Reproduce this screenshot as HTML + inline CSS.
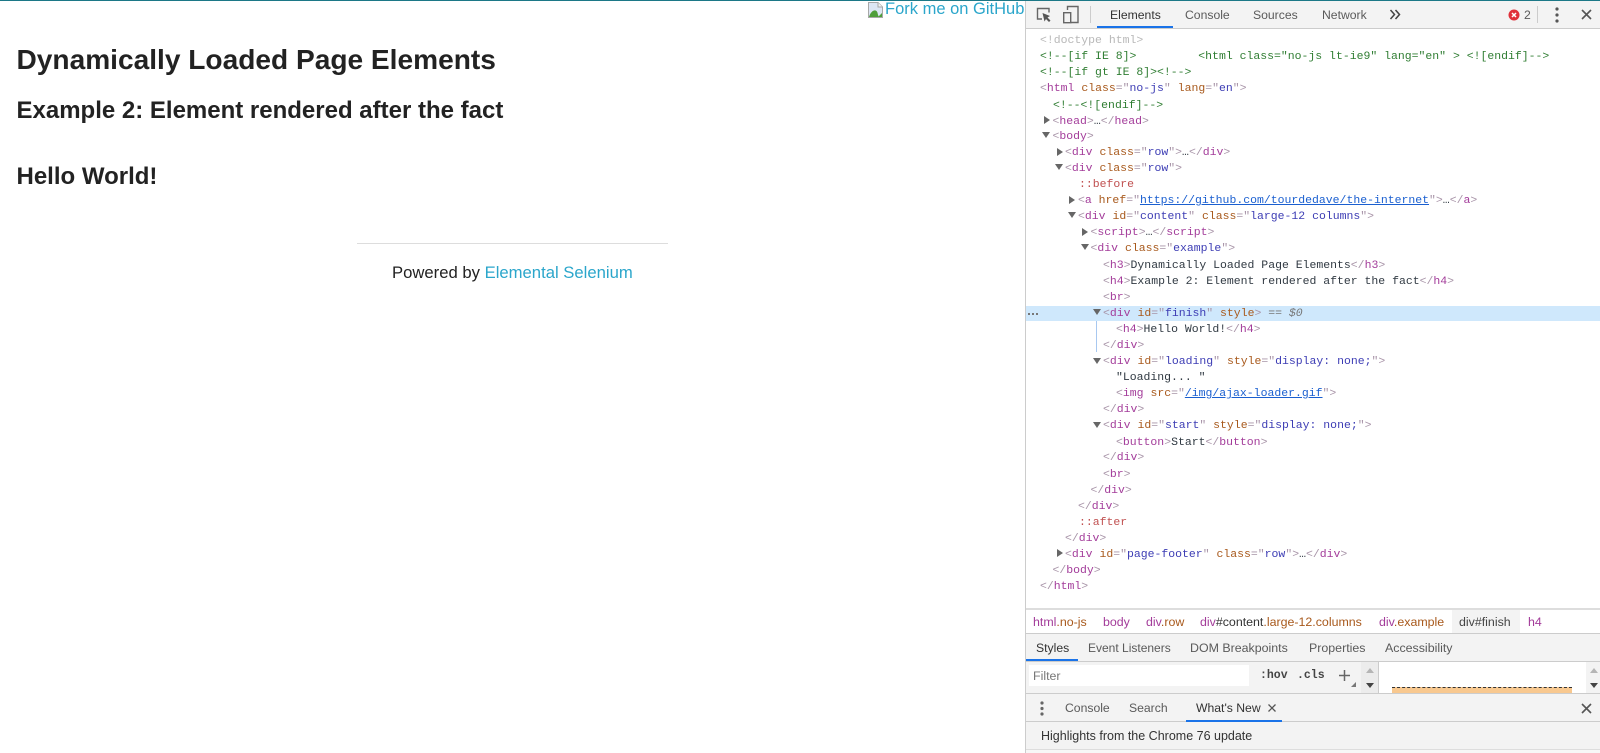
<!DOCTYPE html>
<html lang="en"><head><meta charset="utf-8"><title>Dynamically Loaded Page Elements</title>
<style>
html,body{margin:0;padding:0;background:#fff;width:1600px;height:753px;overflow:hidden}
body{position:relative;font-family:"Liberation Sans",sans-serif;color:#222}
.abs,.l,.u{position:absolute;white-space:pre}
#top{position:absolute;left:0;top:0;width:1600px;height:1px;background:#1c7887;z-index:5}
h3,h4{position:absolute;margin:0;left:16.5px;font-weight:bold;color:#222;white-space:pre;line-height:32px}
h3{font-size:28.1px;top:44px}
h4{font-size:24px}
#dt{position:absolute;left:1025px;top:0;width:575px;height:753px;background:#fff;border-left:1px solid #ccc;box-sizing:border-box}
.bar{position:absolute;left:1026px;width:574px;background:#f3f3f3}
.line{position:absolute;background:#ccc}
.u{font-size:12.2px;line-height:16px;color:#5a5a5a}
.l{font-family:"Liberation Mono",monospace;font-size:11.47px;line-height:16px;color:#303942;height:16px}
.t{color:#a33c9a}.a{color:#a8591c}.v{color:#3c3cb4}.c{color:#2f7d32}.g{color:#b8b8b8}.p{color:#c05050}.b{color:#a894a8}
.h{color:#1a5fd0;text-decoration:underline}
.arr{position:absolute;width:0;height:0}
.ad{border-left:4px solid transparent;border-right:4px solid transparent;border-top:6px solid #666}
.ar{border-top:4px solid transparent;border-bottom:4px solid transparent;border-left:6px solid #666}
.crumb{font-size:12.4px}
</style></head>
<body>
<div id="top"></div>

<h3>Dynamically Loaded Page Elements</h3>
<h4 style="top:95px">Example 2: Element rendered after the fact</h4>
<h4 style="top:161px">Hello World!</h4>
<div class="abs" style="left:357px;top:243px;width:311px;height:1px;background:#ddd"></div>
<div class="abs" style="left:392px;top:262px;font-size:16.67px;line-height:22px;color:#222">Powered by <span style="color:#2ba6cb">Elemental Selenium</span></div>

<svg class="abs" style="left:867px;top:1px" width="18" height="18" viewBox="0 0 18 18"><path d="M1.5 1.5H11L15.5 6V16.5H1.5Z" fill="#dde6f4" stroke="#a8a8a8"/><path d="M11 1.5V6H15.5" fill="#f2f2f2" stroke="#a8a8a8"/><path d="M2 16C3.5 11 7 8 9.5 10C11 11.5 10.5 14 12 16Z" fill="#4f9e3a"/><path d="M11 16L15 12V16Z" fill="#4f9e3a"/></svg>
<div class="abs" style="left:885px;top:-1px;font-size:16.5px;line-height:20px;color:#2ba6cb;width:140px;overflow:hidden">Fork me on GitHub</div>

<div id="dt"></div>

<!-- top toolbar -->
<div class="bar" style="top:1px;height:27px"></div>
<div class="line" style="left:1026px;top:28px;width:574px;height:1px"></div>
<svg class="abs" style="left:1035px;top:6px" width="18" height="18" viewBox="0 0 18 18"><path d="M7 13H2.5V2.5H14V6.5" fill="none" stroke="#666" stroke-width="1.4"/><path d="M7.5 7L15 10L12.5 11.5L15.5 14.5L14 16L11 13L9.5 15.5Z" fill="#555"/></svg>
<svg class="abs" style="left:1062px;top:5px" width="18" height="20" viewBox="0 0 18 20"><path d="M5.5 5V1.5H16V17.5H9" fill="none" stroke="#666" stroke-width="1.4"/><rect x="1.7" y="7.7" width="7" height="10" fill="none" stroke="#666" stroke-width="1.4"/></svg>
<div class="abs" style="left:1090px;top:6px;width:1px;height:17px;background:#ccc"></div>
<div class="u" style="left:1110px;top:7px;color:#333">Elements</div>
<div class="abs" style="left:1097px;top:26px;width:76px;height:2px;background:#1a73e8"></div>
<div class="u" style="left:1185px;top:7px">Console</div>
<div class="u" style="left:1253px;top:7px">Sources</div>
<div class="u" style="left:1322px;top:7px">Network</div>
<svg class="abs" style="left:1389px;top:9px" width="12" height="11" viewBox="0 0 12 11"><path d="M1.5 1L5.5 5.5L1.5 10M6.5 1L10.5 5.5L6.5 10" fill="none" stroke="#444" stroke-width="1.5"/></svg>
<svg class="abs" style="left:1508px;top:9px" width="12" height="12" viewBox="0 0 12 12"><circle cx="6" cy="6" r="5.5" fill="#e0303a"/><path d="M4 4L8 8M8 4L4 8" stroke="#fff" stroke-width="1.5"/></svg>
<div class="u" style="left:1524px;top:7px">2</div>
<div class="abs" style="left:1537px;top:6px;width:1px;height:17px;background:#ccc"></div>
<svg class="abs" style="left:1555px;top:7px" width="4" height="16" viewBox="0 0 4 16"><circle cx="2" cy="2" r="1.6" fill="#555"/><circle cx="2" cy="8" r="1.6" fill="#555"/><circle cx="2" cy="14" r="1.6" fill="#555"/></svg>
<svg class="abs" style="left:1581px;top:9px" width="11" height="11" viewBox="0 0 11 11"><path d="M1 1L10 10M10 1L1 10" stroke="#555" stroke-width="1.6"/></svg>

<!-- highlight -->
<div class="abs" style="left:1026px;top:306px;width:574px;height:15px;background:#cfe8fc"></div>
<div class="abs" style="left:1096px;top:321px;width:1px;height:31px;background:#a8c8f0"></div>
<div class="abs" style="left:1028px;top:313px;width:10px;height:2px;background:repeating-linear-gradient(90deg,#777 0 2px,transparent 2px 4px)"></div>

<!-- DOM -->
<div class="l" style="left:1040px;top:33px"><span class="g">&lt;!doctype html&gt;</span></div>
<div class="l" style="left:1040px;top:49px"><span class="c">&lt;!--[if IE 8]&gt;         &lt;html class="no-js lt-ie9" lang="en" &gt; &lt;![endif]--&gt;</span></div>
<div class="l" style="left:1040px;top:65px"><span class="c">&lt;!--[if gt IE 8]&gt;&lt;!--&gt;</span></div>
<div class="l" style="left:1040px;top:81px"><span class="b">&lt;</span><span class="t">html</span> <span class="a">class</span><span class="b">="</span><span class="v">no-js</span><span class="b">"</span> <span class="a">lang</span><span class="b">="</span><span class="v">en</span><span class="b">"&gt;</span></div>
<div class="l" style="left:1053px;top:98px"><span class="c">&lt;!--&lt;![endif]--&gt;</span></div>
<div class="l" style="left:1052.5px;top:114px"><span class="b">&lt;</span><span class="t">head</span><span class="b">&gt;</span>…<span class="b">&lt;/</span><span class="t">head</span><span class="b">&gt;</span></div>
<div class="l" style="left:1052.5px;top:129px"><span class="b">&lt;</span><span class="t">body</span><span class="b">&gt;</span></div>
<div class="l" style="left:1065px;top:145px"><span class="b">&lt;</span><span class="t">div</span> <span class="a">class</span><span class="b">="</span><span class="v">row</span><span class="b">"&gt;</span>…<span class="b">&lt;/</span><span class="t">div</span><span class="b">&gt;</span></div>
<div class="l" style="left:1065px;top:161px"><span class="b">&lt;</span><span class="t">div</span> <span class="a">class</span><span class="b">="</span><span class="v">row</span><span class="b">"&gt;</span></div>
<div class="l" style="left:1079px;top:177px"><span class="p">::before</span></div>
<div class="l" style="left:1078px;top:193px"><span class="b">&lt;</span><span class="t">a</span> <span class="a">href</span><span class="b">="</span><span class="h">https://github.com/tourdedave/the-internet</span><span class="b">"&gt;</span>…<span class="b">&lt;/</span><span class="t">a</span><span class="b">&gt;</span></div>
<div class="l" style="left:1078px;top:209px"><span class="b">&lt;</span><span class="t">div</span> <span class="a">id</span><span class="b">="</span><span class="v">content</span><span class="b">"</span> <span class="a">class</span><span class="b">="</span><span class="v">large-12 columns</span><span class="b">"&gt;</span></div>
<div class="l" style="left:1090.5px;top:225px"><span class="b">&lt;</span><span class="t">script</span><span class="b">&gt;</span>…<span class="b">&lt;/</span><span class="t">script</span><span class="b">&gt;</span></div>
<div class="l" style="left:1090.5px;top:241px"><span class="b">&lt;</span><span class="t">div</span> <span class="a">class</span><span class="b">="</span><span class="v">example</span><span class="b">"&gt;</span></div>
<div class="l" style="left:1103px;top:258px"><span class="b">&lt;</span><span class="t">h3</span><span class="b">&gt;</span>Dynamically Loaded Page Elements<span class="b">&lt;/</span><span class="t">h3</span><span class="b">&gt;</span></div>
<div class="l" style="left:1103px;top:274px"><span class="b">&lt;</span><span class="t">h4</span><span class="b">&gt;</span>Example 2: Element rendered after the fact<span class="b">&lt;/</span><span class="t">h4</span><span class="b">&gt;</span></div>
<div class="l" style="left:1103px;top:290px"><span class="b">&lt;</span><span class="t">br</span><span class="b">&gt;</span></div>
<div class="l" style="left:1103px;top:306px"><span class="b">&lt;</span><span class="t">div</span> <span class="a">id</span><span class="b">="</span><span class="v">finish</span><span class="b">"</span> <span class="a">style</span><span class="b">&gt;</span> <span style="color:#777">== <i>$0</i></span></div>
<div class="l" style="left:1116px;top:322px"><span class="b">&lt;</span><span class="t">h4</span><span class="b">&gt;</span>Hello World!<span class="b">&lt;/</span><span class="t">h4</span><span class="b">&gt;</span></div>
<div class="l" style="left:1103px;top:338px"><span class="b">&lt;/</span><span class="t">div</span><span class="b">&gt;</span></div>
<div class="l" style="left:1103px;top:354px"><span class="b">&lt;</span><span class="t">div</span> <span class="a">id</span><span class="b">="</span><span class="v">loading</span><span class="b">"</span> <span class="a">style</span><span class="b">="</span><span class="v">display: none;</span><span class="b">"&gt;</span></div>
<div class="l" style="left:1116px;top:370px">"Loading... "</div>
<div class="l" style="left:1116px;top:386px"><span class="b">&lt;</span><span class="t">img</span> <span class="a">src</span><span class="b">="</span><span class="h">/img/ajax-loader.gif</span><span class="b">"&gt;</span></div>
<div class="l" style="left:1103px;top:402px"><span class="b">&lt;/</span><span class="t">div</span><span class="b">&gt;</span></div>
<div class="l" style="left:1103px;top:418px"><span class="b">&lt;</span><span class="t">div</span> <span class="a">id</span><span class="b">="</span><span class="v">start</span><span class="b">"</span> <span class="a">style</span><span class="b">="</span><span class="v">display: none;</span><span class="b">"&gt;</span></div>
<div class="l" style="left:1116px;top:435px"><span class="b">&lt;</span><span class="t">button</span><span class="b">&gt;</span>Start<span class="b">&lt;/</span><span class="t">button</span><span class="b">&gt;</span></div>
<div class="l" style="left:1103px;top:450px"><span class="b">&lt;/</span><span class="t">div</span><span class="b">&gt;</span></div>
<div class="l" style="left:1103px;top:467px"><span class="b">&lt;</span><span class="t">br</span><span class="b">&gt;</span></div>
<div class="l" style="left:1090.5px;top:483px"><span class="b">&lt;/</span><span class="t">div</span><span class="b">&gt;</span></div>
<div class="l" style="left:1078px;top:499px"><span class="b">&lt;/</span><span class="t">div</span><span class="b">&gt;</span></div>
<div class="l" style="left:1079px;top:515px"><span class="p">::after</span></div>
<div class="l" style="left:1065px;top:531px"><span class="b">&lt;/</span><span class="t">div</span><span class="b">&gt;</span></div>
<div class="l" style="left:1065px;top:547px"><span class="b">&lt;</span><span class="t">div</span> <span class="a">id</span><span class="b">="</span><span class="v">page-footer</span><span class="b">"</span> <span class="a">class</span><span class="b">="</span><span class="v">row</span><span class="b">"&gt;</span>…<span class="b">&lt;/</span><span class="t">div</span><span class="b">&gt;</span></div>
<div class="l" style="left:1052.5px;top:563px"><span class="b">&lt;/</span><span class="t">body</span><span class="b">&gt;</span></div>
<div class="l" style="left:1040px;top:579px"><span class="b">&lt;/</span><span class="t">html</span><span class="b">&gt;</span></div>

<!-- arrows -->
<div class="arr ar" style="left:1044px;top:116px"></div>
<div class="arr ad" style="left:1042px;top:132px"></div>
<div class="arr ar" style="left:1057px;top:148px"></div>
<div class="arr ad" style="left:1055px;top:164px"></div>
<div class="arr ar" style="left:1069px;top:196px"></div>
<div class="arr ad" style="left:1068px;top:212px"></div>
<div class="arr ar" style="left:1082px;top:228px"></div>
<div class="arr ad" style="left:1081px;top:244px"></div>
<div class="arr ad" style="left:1093px;top:309px"></div>
<div class="arr ad" style="left:1093px;top:358px"></div>
<div class="arr ad" style="left:1093px;top:422px"></div>
<div class="arr ar" style="left:1057px;top:549px"></div>

<!-- breadcrumbs -->
<div class="line" style="left:1026px;top:608px;width:574px;height:2px;background:#ddd"></div>
<div class="abs" style="left:1452px;top:610px;width:68px;height:23px;background:#f3f3f3"></div>
<div class="u crumb" style="left:1033px;top:614px"><span class="t">html</span><span class="a">.no-js</span></div>
<div class="u crumb" style="left:1103px;top:614px"><span class="t">body</span></div>
<div class="u crumb" style="left:1146px;top:614px"><span class="t">div</span><span class="a">.row</span></div>
<div class="u crumb" style="left:1200px;top:614px"><span class="t">div</span><span style="color:#333">#content</span><span class="a">.large-12.columns</span></div>
<div class="u crumb" style="left:1379px;top:614px"><span class="t">div</span><span class="a">.example</span></div>
<div class="u crumb" style="left:1459px;top:614px;color:#444">div#finish</div>
<div class="u crumb" style="left:1528px;top:614px"><span class="t">h4</span></div>

<!-- styles tabs -->
<div class="bar" style="top:633px;height:28px;border-top:1px solid #ccc;box-sizing:border-box"></div>
<div class="line" style="left:1026px;top:661px;width:574px;height:1px"></div>
<div class="u" style="left:1036px;top:640px;color:#333">Styles</div>
<div class="abs" style="left:1026px;top:659px;width:52px;height:2px;background:#1a73e8"></div>
<div class="u" style="left:1088px;top:640px;font-size:12px">Event Listeners</div>
<div class="u" style="left:1190px;top:640px;font-size:12.4px">DOM Breakpoints</div>
<div class="u" style="left:1309px;top:640px;font-size:12.4px">Properties</div>
<div class="u" style="left:1385px;top:640px;font-size:12.4px">Accessibility</div>

<!-- filter row -->
<div class="bar" style="top:662px;height:31px"></div>
<div class="abs" style="left:1029px;top:665px;width:220px;height:21px;background:#fff"></div>
<div class="u" style="left:1033px;top:668px;color:#777;font-size:12.4px">Filter</div>
<div class="abs" style="left:1260px;top:668px;font:bold 11.5px/16px 'Liberation Mono',monospace;color:#444">:hov</div>
<div class="abs" style="left:1297px;top:668px;font:bold 11.5px/16px 'Liberation Mono',monospace;color:#444">.cls</div>
<svg class="abs" style="left:1338px;top:669px" width="13" height="13" viewBox="0 0 13 13"><path d="M6.5 1V12M1 6.5H12" stroke="#666" stroke-width="1.5"/></svg>
<div class="arr" style="left:1351px;top:682px;border-left:5px solid transparent;border-bottom:5px solid #777"></div>
<div class="abs" style="left:1361px;top:662px;width:17px;height:31px;background:#ececec"></div>
<div class="abs" style="left:1378px;top:662px;width:1px;height:31px;background:#ccc"></div>
<div class="abs" style="left:1379px;top:662px;width:207px;height:31px;background:#fff"></div>
<div class="abs" style="left:1392px;top:687px;width:180px;height:6px;background:#f8c88f;border-top:1px dashed #333;box-sizing:border-box"></div>
<div class="arr" style="left:1366px;top:668px;border-left:4px solid transparent;border-right:4px solid transparent;border-bottom:5px solid #b5b5b5"></div>
<div class="arr" style="left:1366px;top:683px;border-left:4px solid transparent;border-right:4px solid transparent;border-top:5px solid #444"></div>
<div class="arr" style="left:1590px;top:668px;border-left:4px solid transparent;border-right:4px solid transparent;border-bottom:5px solid #b5b5b5"></div>
<div class="arr" style="left:1590px;top:683px;border-left:4px solid transparent;border-right:4px solid transparent;border-top:5px solid #444"></div>

<!-- drawer -->
<div class="line" style="left:1026px;top:693px;width:574px;height:1px"></div>
<div class="bar" style="top:694px;height:27px"></div>
<div class="line" style="left:1026px;top:721px;width:574px;height:1px"></div>
<svg class="abs" style="left:1040px;top:701px" width="4" height="15" viewBox="0 0 4 15"><circle cx="2" cy="2" r="1.6" fill="#666"/><circle cx="2" cy="7.5" r="1.6" fill="#666"/><circle cx="2" cy="13" r="1.6" fill="#666"/></svg>
<div class="u" style="left:1065px;top:700px">Console</div>
<div class="u" style="left:1129px;top:700px">Search</div>
<div class="u" style="left:1196px;top:700px;color:#333">What's New</div>
<svg class="abs" style="left:1268px;top:704px" width="8" height="8" viewBox="0 0 8 8"><path d="M.5 .5L7.5 7.5M7.5 .5L.5 7.5" stroke="#555" stroke-width="1.3"/></svg>
<div class="abs" style="left:1186px;top:720px;width:96px;height:2px;background:#1a73e8"></div>
<svg class="abs" style="left:1581px;top:703px" width="11" height="11" viewBox="0 0 11 11"><path d="M1 1L10 10M10 1L1 10" stroke="#555" stroke-width="1.6"/></svg>
<div class="bar" style="top:722px;height:27px"></div>
<div class="u" style="left:1041px;top:728px;color:#333;font-size:12.5px">Highlights from the Chrome 76 update</div>
<div class="line" style="left:1026px;top:749px;width:574px;height:1px;background:#ddd"></div>
<div class="bar" style="top:750px;height:3px;background:#f7f7f7"></div>
</body></html>
